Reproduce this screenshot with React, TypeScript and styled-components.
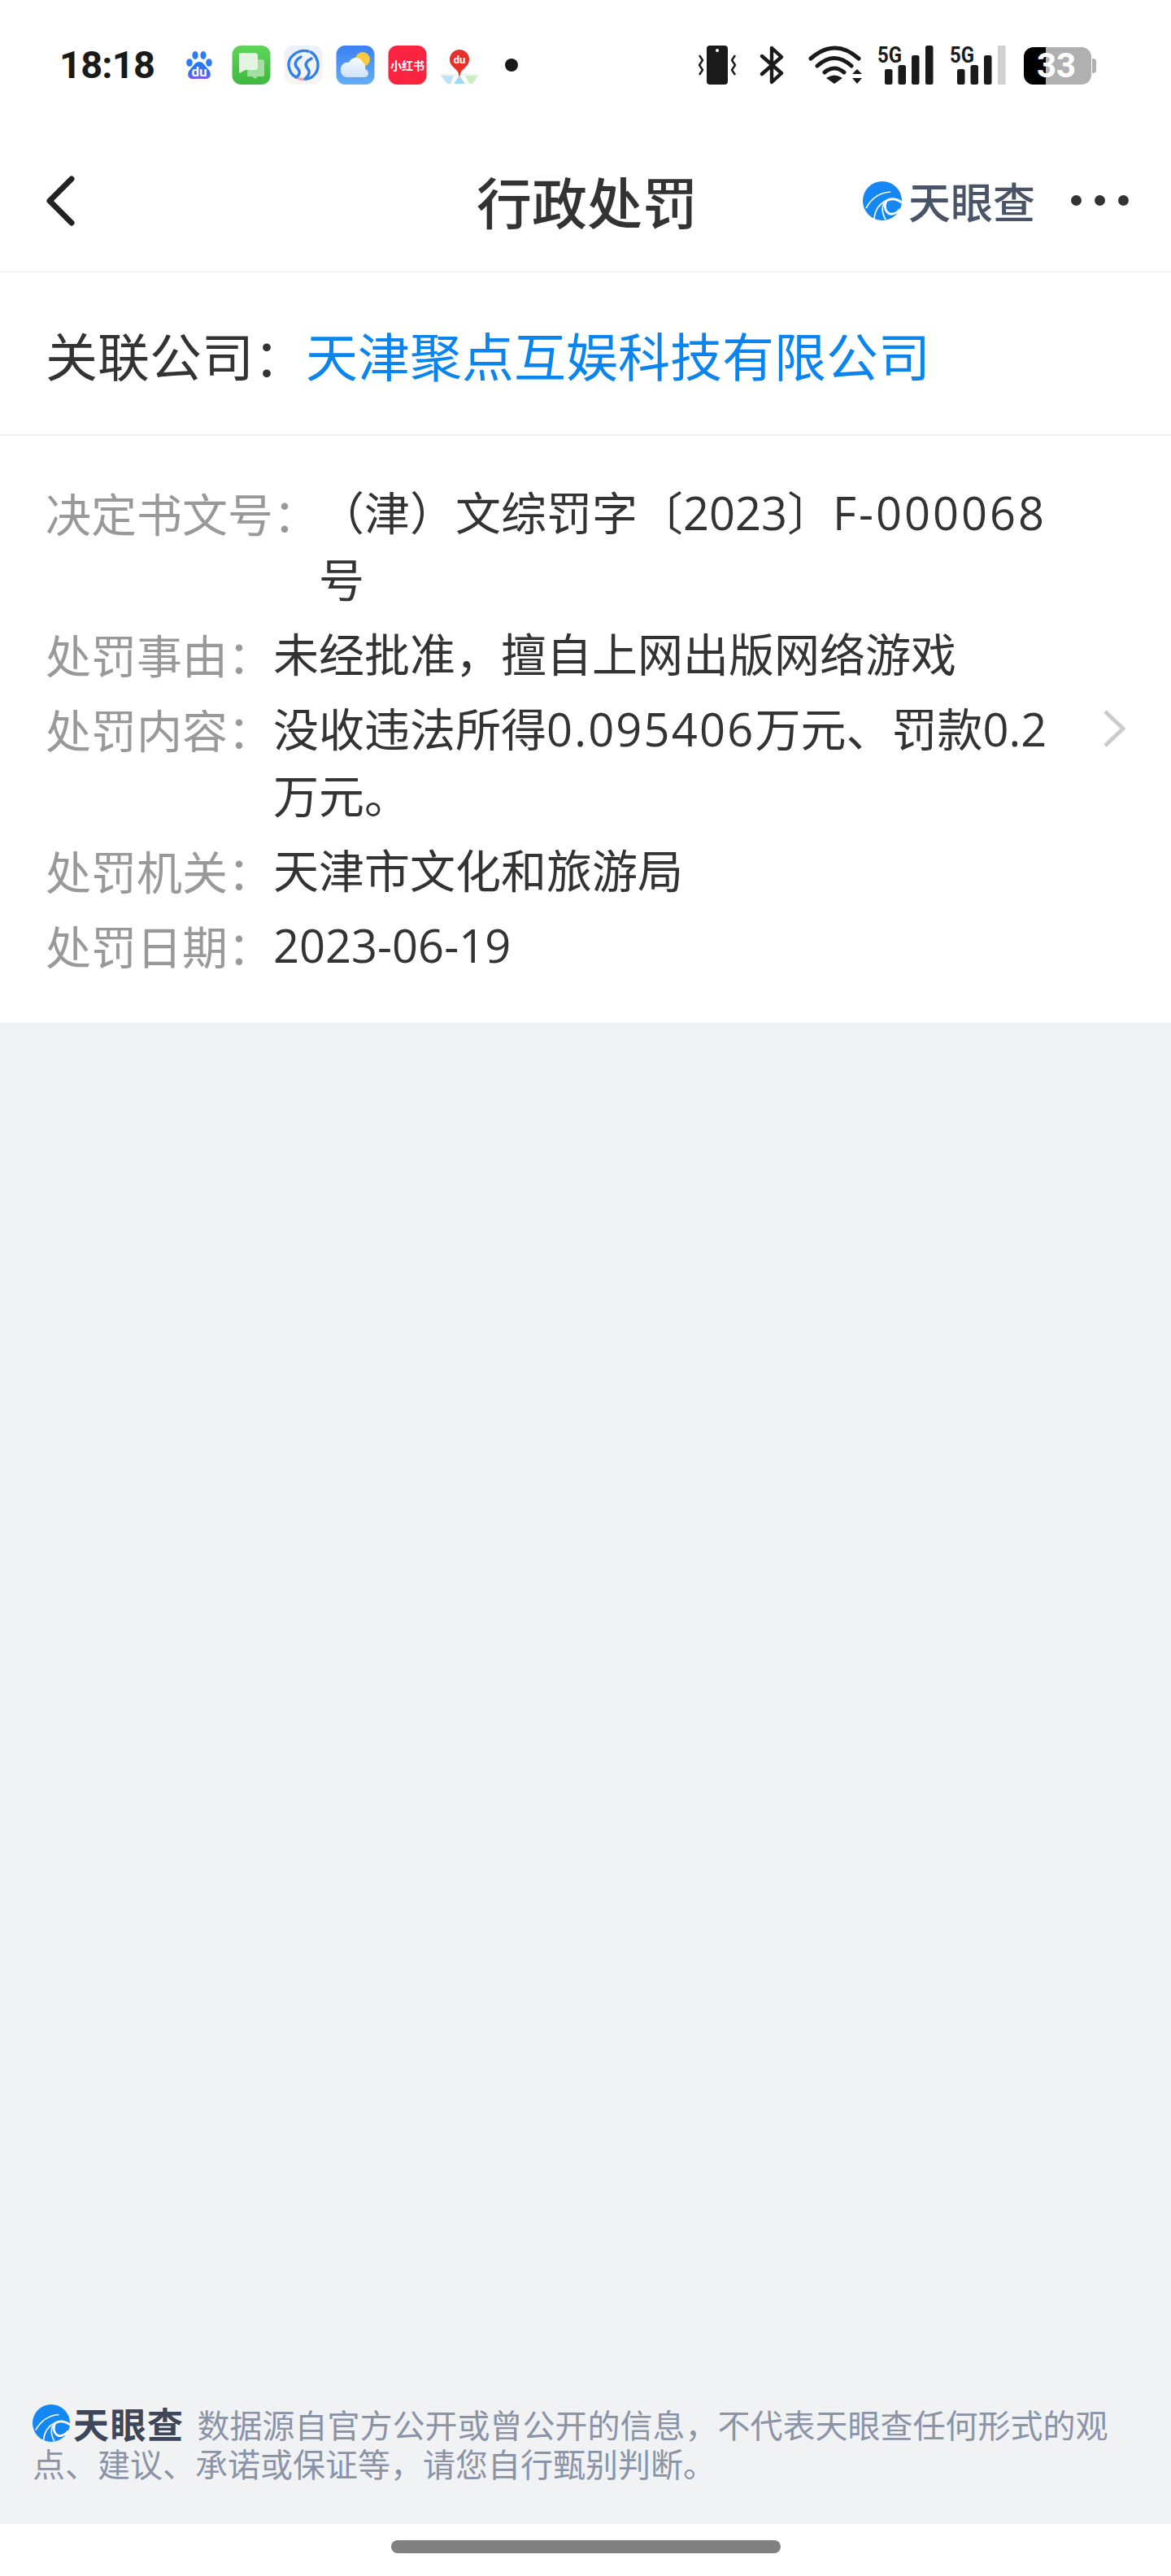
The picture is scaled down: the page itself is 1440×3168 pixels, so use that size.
import type { ReactNode } from 'react'
import styled, { createGlobalStyle } from 'styled-components'

const GlobalStyle = createGlobalStyle`
  html, body {
    margin: 0;
    padding: 0;
    background: #fff;
  }
  body {
    font-family: "Open Sans", "Noto Sans CJK SC", sans-serif;
  }
`;

const CJK = `"Noto Sans CJK SC", sans-serif`;

const Page = styled.div`
  width: 1440px;
  height: 3168px;
  display: flex;
  flex-direction: column;
  background: #fff;
  overflow: hidden;
`;

const StatusBar = styled.div`
  height: 160px;
  box-sizing: border-box;
  padding: 56px 92px 0 73px;
  display: flex;
  align-items: flex-start;
`;

const Clock = styled.div`
  width: 148px;
  height: 48px;
  line-height: 48px;
  font-family: Roboto, sans-serif;
  font-size: 47px;
  font-weight: 700;
  letter-spacing: -0.8px;
  color: #1a1a1a;
`;

const AppIcons = styled.div`
  display: flex;
  gap: 16px;
`;

const SysIcons = styled.div`
  margin-left: auto;
  display: flex;
  align-items: flex-start;
`;

const SysSlot = styled.div<{ $left: number }>`
  margin-left: ${p => p.$left}px;
  height: 48px;
  display: flex;
`;

const Battery = styled.div`
  position: relative;
  width: 89px;
  height: 46px;
  margin-top: 2px;
  display: flex;
  align-items: center;
`;

const BatteryBody = styled.div`
  width: 83px;
  height: 46px;
  border-radius: 12px;
  overflow: hidden;
  background: #b0b0b0;
`;

const BatteryLevel = styled.div`
  height: 100%;
  background: #000;
`;

const BatteryCap = styled.div`
  width: 5px;
  height: 18px;
  margin-left: 1px;
  border-radius: 0 4px 4px 0;
  background: #b0b0b0;
`;

const BatteryText = styled.span`
  position: absolute;
  left: 16px;
  top: 0;
  line-height: 46px;
  font-family: Roboto, sans-serif;
  font-size: 42px;
  font-weight: 700;
  color: #fff;
`;

const NavBar = styled.div`
  height: 175px;
  box-sizing: border-box;
  padding: 0 52px 0 56px;
  display: grid;
  grid-template-columns: 1fr auto 1fr;
  align-items: center;
  border-bottom: 2px solid #f2f2f2;
`;

const BackIcon = styled.svg`
  width: 36px;
  height: 62px;
  display: block;
`;

const Title = styled.div`
  font-family: ${CJK};
  font-size: 68px;
  font-weight: 500;
  line-height: 80px;
  color: #333;
`;

const NavRight = styled.div`
  display: flex;
  align-items: center;
  justify-content: flex-end;
`;

const LogoWrap = styled.span<{ $small?: boolean }>`
  display: inline-flex;
  align-items: center;
  gap: ${p => (p.$small ? 4 : 8)}px;
  margin-right: ${p => (p.$small ? 7 : 0)}px;
  vertical-align: ${p => (p.$small ? '-5px' : 'baseline')};
`;

const LogoText = styled.span<{ $small?: boolean }>`
  font-family: ${CJK};
  font-size: ${p => (p.$small ? 44 : 52)}px;
  line-height: ${p => (p.$small ? 46 : 54)}px;
  font-weight: ${p => (p.$small ? 700 : 500)};
  letter-spacing: ${p => (p.$small ? 1.5 : 0)}px;
  color: ${p => (p.$small ? '#3d4759' : '#4a5468')};
`;

const Dots = styled.div`
  margin-left: 44px;
  display: flex;
  gap: 16px;
`;

const Dot = styled.span`
  width: 13px;
  height: 13px;
  border-radius: 50%;
  background: #333;
`;

const CompanyRow = styled.div`
  height: 201px;
  box-sizing: border-box;
  padding: 0 56px;
  display: flex;
  align-items: center;
  border-bottom: 2px solid #f0f0f0;
  font-family: ${CJK};
  font-size: 64px;
  color: #333;
`;

const CompanyName = styled.span`
  color: #0a84ee;
`;

const DetailCard = styled.div`
  padding: 53px 56px 55px;
  display: flex;
  flex-direction: column;
  gap: 10px;
  font-family: "Open Sans", ${CJK};
  font-size: 56px;
  line-height: 82px;
`;

const DetailRow = styled.div`
  display: grid;
  grid-template-columns: auto 1fr 88px;
`;

const DetailLabel = styled.span`
  font-family: ${CJK};
  color: #999;
`;

const DetailValue = styled.span`
  color: #333;
`;

const Num = styled.span<{ $track: number }>`
  letter-spacing: ${p => p.$track}px;
`;

const ArrowSlot = styled.div`
  height: 82px;
  display: flex;
  align-items: center;
  justify-content: flex-end;
`;

const ArrowIcon = styled.svg`
  width: 28px;
  height: 48px;
  display: block;
`;

const GreyArea = styled.div`
  flex: 1;
  display: flex;
  flex-direction: column;
  justify-content: flex-end;
  background: #f0f2f4;
`;

const Disclaimer = styled.p`
  margin: 0;
  padding: 0 56px 51px 40px;
  font-family: ${CJK};
  font-size: 40px;
  line-height: 48px;
  color: #8b93a7;
`;

const HomeArea = styled.div`
  height: 64px;
  display: flex;
  justify-content: center;
  padding-top: 20px;
  box-sizing: border-box;
`;

const HomeBar = styled.div`
  width: 479px;
  height: 16px;
  border-radius: 8px;
  background: #808080;
`;

const Tianyan = ({ size }: { size: number }) => (
  <svg width={size} height={size} viewBox="0 0 48 48" style={{ display: 'block' }}>
    <circle cx="24" cy="24" r="24" fill="#1487f2" />
    <path d="M4 33 C10 22 20 14 34 13" fill="none" stroke="#fff" strokeWidth="1.7" />
    <path d="M14 46 C15 36 20 28 28 24" fill="none" stroke="#fff" strokeWidth="1.7" />
    <path d="M28 47 C24 40 23 33 26 27" fill="none" stroke="#fff" strokeWidth="1.7" />
    <path d="M48 26 C41 21 34 21 29 24 C26 30 27 37 33 40 C38 41 42 39 46 34" fill="none" stroke="#fff" strokeWidth="2.8" />
  </svg>
)

const Logo = ({ small }: { small?: boolean }) => (
  <LogoWrap $small={small}>
    <Tianyan size={small ? 46 : 48} />
    <LogoText $small={small}>天眼查</LogoText>
  </LogoWrap>
)

const BaiduIcon = () => (
  <svg width="48" height="48" viewBox="0 0 48 48">
    <defs>
      <linearGradient id="paw" x1="0" y1="0" x2="0" y2="1">
        <stop offset="0" stopColor="#1f7bff" />
        <stop offset="0.7" stopColor="#3b6cf0" />
        <stop offset="1" stopColor="#8a5be8" />
      </linearGradient>
    </defs>
    <ellipse cx="19" cy="12" rx="3.6" ry="5" fill="#2a7cf8" />
    <ellipse cx="29" cy="12" rx="3.6" ry="5" fill="#2a7cf8" />
    <ellipse cx="12" cy="21" rx="3.8" ry="4.8" fill="#2a7cf8" />
    <ellipse cx="36" cy="21" rx="3.8" ry="4.8" fill="#2a7cf8" />
    <path d="M24 20 C29 20 31 25 35 29 C40 35 38 41 32 41 H16 C10 41 8 35 13 29 C17 25 19 20 24 20 Z" fill="url(#paw)" />
    <text x="24" y="38" textAnchor="middle" fontFamily="Roboto, sans-serif" fontSize="17" fontWeight="700" fill="#fff">du</text>
  </svg>
)

const MessageIcon = () => (
  <svg width="48" height="48" viewBox="0 0 48 48">
    <defs>
      <linearGradient id="msg" x1="0" y1="0" x2="0" y2="1">
        <stop offset="0" stopColor="#5ed55a" />
        <stop offset="1" stopColor="#3fb83f" />
      </linearGradient>
    </defs>
    <rect x="0.5" width="47" height="48" rx="11" fill="url(#msg)" />
    <path d="M20 17 H37 Q40 17 40 20 V36 Q40 38 38 38 H32 L29 41 L25 38 H19 Z" fill="#a4dfa2" />
    <path d="M11 9 H28 Q32 9 32 13 V27 Q32 30 28 30 H17 L9 34 V11 Q9 9 11 9 Z" fill="#e3f4e0" />
  </svg>
)

const RingIcon = () => (
  <svg width="48" height="48" viewBox="0 0 48 48">
    <defs>
      <linearGradient id="ringBg" x1="0" y1="0" x2="0" y2="1">
        <stop offset="0" stopColor="#eaf1fb" />
        <stop offset="1" stopColor="#faf5f2" />
      </linearGradient>
    </defs>
    <rect x="0.5" width="47" height="48" rx="11" fill="url(#ringBg)" />
    <path d="M15 39 C20 42 24 42 28 41" fill="none" stroke="#e6a8bc" strokeWidth="3.4" strokeLinecap="round" />
    <path d="M30 7 C17 4 5 14 6 25 C7 32 11 37 15 39 C20 36 21 32 16 27 C12 23 15 17 21 14" fill="none" stroke="#2f80e8" strokeWidth="3.4" strokeLinecap="round" strokeLinejoin="round" />
    <path d="M33 8 C39 11 42 18 42 24 C42 33 36 40 28 41" fill="none" stroke="#2f80e8" strokeWidth="3.4" strokeLinecap="round" />
    <path d="M34 16 C28 19 25 23 29 28 C33 32 31 37 26 41" fill="none" stroke="#2f80e8" strokeWidth="3.4" strokeLinecap="round" />
  </svg>
)

const WeatherIcon = () => (
  <svg width="48" height="48" viewBox="0 0 48 48">
    <defs>
      <linearGradient id="sky" x1="0" y1="0" x2="0" y2="1">
        <stop offset="0" stopColor="#3a80f5" />
        <stop offset="1" stopColor="#64aef6" />
      </linearGradient>
      <linearGradient id="cloud" x1="0" y1="0" x2="0" y2="1">
        <stop offset="0" stopColor="#f7fbff" />
        <stop offset="1" stopColor="#cfe1f8" />
      </linearGradient>
    </defs>
    <rect x="0.5" width="47" height="48" rx="11" fill="url(#sky)" />
    <circle cx="33" cy="17" r="9" fill="#f6c93f" />
    <path d="M14 39 C8 39 5 33 6 28 C7 23 11 20 16 21 C19 14 28 13 32 19 C36 23 37 27 36 29 C41 30 42 39 35 39 Z" fill="url(#cloud)" />
  </svg>
)

const RedIcon = () => (
  <svg width="48" height="48" viewBox="0 0 48 48">
    <rect x="0.5" width="47" height="48" rx="11" fill="#fa2440" />
    <text x="24" y="30" textAnchor="middle" fontFamily={CJK} fontSize="14" fontWeight="700" fill="#fff">小红书</text>
  </svg>
)

const MapIcon = () => (
  <svg width="48" height="48" viewBox="0 0 48 48">
    <path d="M1 35 H47 V36.5 H1 Z" fill="#e4f2ee" />
    <path d="M1 37 H17 L13 47 H9 Z" fill="#bfe3f8" />
    <path d="M47 37 H31 L36 47 H40 Z" fill="#cdeec0" />
    <path d="M24 37 L31 47 H17 Z" fill="#9fd8f6" />
    <path d="M24 34 L16 26 A12 12 0 1 1 32 26 Z" fill="#e8302a" />
    <path d="M24 39 L21 28 H27 Z" fill="#e8302a" />
    <text x="24" y="22" textAnchor="middle" fontFamily="Roboto, sans-serif" fontSize="13" fontWeight="700" fill="#fff">du</text>
  </svg>
)

const NotifyDot = () => (
  <svg width="48" height="48" viewBox="0 0 48 48">
    <circle cx="24" cy="24" r="8" fill="#1a1a1a" />
  </svg>
)

const VibrateIcon = () => (
  <svg width="48" height="48" viewBox="0 0 48 48">
    <rect x="11" y="0" width="26" height="48" rx="4" fill="#1a1a1a" />
    <circle cx="24" cy="6" r="2" fill="#fff" />
    <path d="M2 12 L6 18 L2 24 L6 30 L2 36" fill="none" stroke="#1a1a1a" strokeWidth="2.4" strokeLinejoin="round" />
    <path d="M46 12 L42 18 L46 24 L42 30 L46 36" fill="none" stroke="#1a1a1a" strokeWidth="2.4" strokeLinejoin="round" />
  </svg>
)

const BluetoothIcon = () => (
  <svg width="30" height="48" viewBox="0 0 30 48">
    <path d="M3 13 L27 34 L15 45 V3 L27 14 L3 35" fill="none" stroke="#1a1a1a" strokeWidth="4.4" strokeLinecap="round" strokeLinejoin="round" />
  </svg>
)

const WifiIcon = () => (
  <svg width="72" height="48" viewBox="0 0 72 48">
    <path d="M6 16 Q35.5 -10 65 16" fill="none" stroke="#1a1a1a" strokeWidth="5" strokeLinecap="round" />
    <path d="M14 25 Q35 6 56 25" fill="none" stroke="#1a1a1a" strokeWidth="5" strokeLinecap="round" />
    <path d="M23 33 Q35 23 47 33" fill="none" stroke="#1a1a1a" strokeWidth="5" strokeLinecap="round" />
    <path d="M35 47 L25 40 Q35 33 45 40 Z" fill="#1a1a1a" />
    <path d="M63 29 L69 35 H57 Z" fill="#1a1a1a" />
    <path d="M57 40 H69 L63 47 Z" fill="#1a1a1a" />
  </svg>
)

const SignalIcon = ({ dimLast }: { dimLast?: boolean }) => {
  const bars = [
    { x: 9, top: 29 },
    { x: 25.5, top: 24 },
    { x: 42, top: 12 },
    { x: 59, top: 0 },
  ]
  return (
    <svg width="69" height="48" viewBox="0 0 69 48">
      <text x="0" y="21" fontFamily="Roboto, sans-serif" fontSize="27" fontWeight="700" fill="#1a1a1a" textLength="30" lengthAdjust="spacingAndGlyphs">5G</text>
      {bars.map((b, i) => {
        const dim = dimLast && i === bars.length - 1
        return (
          <rect key={b.x} x={b.x} y={b.top} width="9.5" height={48 - b.top} rx={dim ? 0 : 2.5} fill={dim ? '#d0d0d0' : '#1a1a1a'} />
        )
      })}
    </svg>
  )
}

const rows: { label: string; value: ReactNode; arrow?: boolean }[] = [
  { label: '决定书文号：', value: <>（津）文综罚字〔2023〕<Num $track={3}>F-000068</Num>号</> },
  { label: '处罚事由：', value: '未经批准，擅自上网出版网络游戏' },
  { label: '处罚内容：', value: <>没收违法所得<Num $track={2.2}>0.095406</Num>万元、罚款0.2万元。</>, arrow: true },
  { label: '处罚机关：', value: '天津市文化和旅游局' },
  { label: '处罚日期：', value: '2023-06-19' },
]

const App = () => {
  const batteryLevel = 33

  return (
    <Page lang="zh-CN">
      <GlobalStyle />
      <StatusBar>
        <Clock>18:18</Clock>
        <AppIcons>
          <BaiduIcon />
          <MessageIcon />
          <RingIcon />
          <WeatherIcon />
          <RedIcon />
          <MapIcon />
          <NotifyDot />
        </AppIcons>
        <SysIcons>
          <SysSlot $left={0}><VibrateIcon /></SysSlot>
          <SysSlot $left={28}><BluetoothIcon /></SysSlot>
          <SysSlot $left={27}><WifiIcon /></SysSlot>
          <SysSlot $left={16}><SignalIcon /></SysSlot>
          <SysSlot $left={20}><SignalIcon dimLast /></SysSlot>
          <SysSlot $left={22}>
            <Battery>
              <BatteryBody>
                <BatteryLevel style={{ width: `${batteryLevel}%` }} />
              </BatteryBody>
              <BatteryCap />
              <BatteryText>{batteryLevel}</BatteryText>
            </Battery>
          </SysSlot>
        </SysIcons>
      </StatusBar>

      <NavBar>
        <BackIcon viewBox="0 0 36 62">
          <path d="M32 4 L5 31 L32 58" fill="none" stroke="#222" strokeWidth="7" strokeLinecap="round" strokeLinejoin="round" />
        </BackIcon>
        <Title>行政处罚</Title>
        <NavRight>
          <Logo />
          <Dots>
            <Dot />
            <Dot />
            <Dot />
          </Dots>
        </NavRight>
      </NavBar>

      <CompanyRow>
        关联公司：<CompanyName>天津聚点互娱科技有限公司</CompanyName>
      </CompanyRow>

      <DetailCard>
        {rows.map(r => (
          <DetailRow key={r.label}>
            <DetailLabel>{r.label}</DetailLabel>
            <DetailValue>{r.value}</DetailValue>
            <ArrowSlot>
              {r.arrow && (
                <ArrowIcon viewBox="0 0 28 48">
                  <path d="M3 3 L25 24 L3 45" fill="none" stroke="#ccc" strokeWidth="5" />
                </ArrowIcon>
              )}
            </ArrowSlot>
          </DetailRow>
        ))}
      </DetailCard>

      <GreyArea>
        <Disclaimer>
          <Logo small /> 数据源自官方公开或曾公开的信息，不代表天眼查任何形式的观点、建议、承诺或保证等，请您自行甄别判断。
        </Disclaimer>
      </GreyArea>

      <HomeArea>
        <HomeBar />
      </HomeArea>
    </Page>
  )
}

export default App
